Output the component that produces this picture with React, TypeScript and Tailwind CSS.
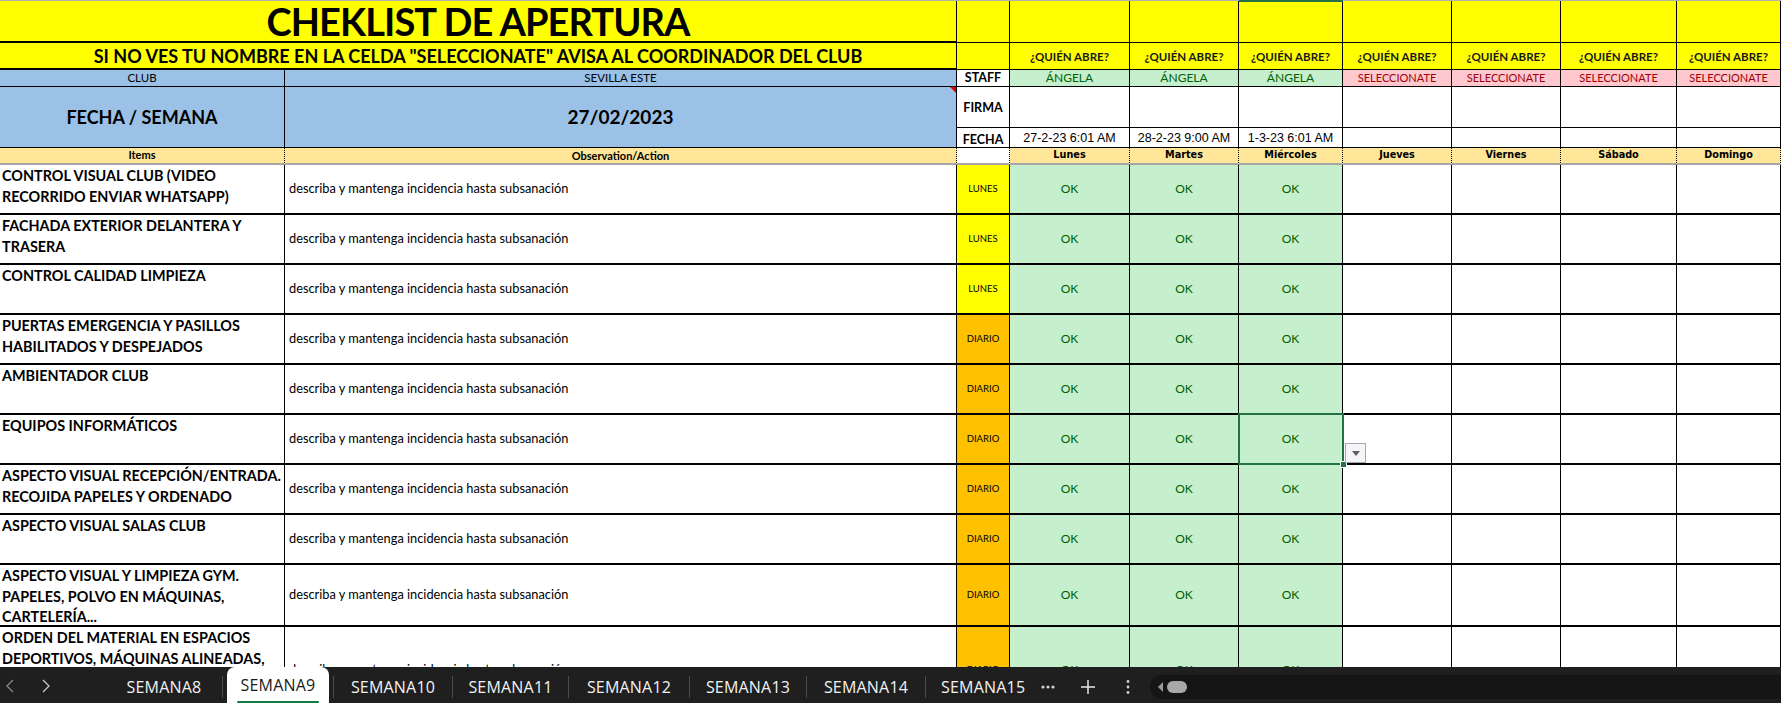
import React from "react";

const Y = "bg-[#ffff00]";
const BLUE = "bg-[#9bc2e6]";
const TAN = "bg-[#ffe699]";
const GREEN = "bg-[#c6efce]";
const PINK = "bg-[#ffc7ce]";
const ORANGE = "bg-[#ffc000]";
const LINES = "border-r border-b border-black box-border whitespace-nowrap";
const CELL = `${LINES} overflow-hidden`;
const CENTER = "flex items-center justify-center";

type Row = { t: string[]; f: "LUNES" | "DIARIO" };

const rows: Row[] = [
  { t: ["CONTROL VISUAL CLUB (VIDEO", "RECORRIDO ENVIAR WHATSAPP)"], f: "LUNES" },
  { t: ["FACHADA EXTERIOR DELANTERA Y", "TRASERA"], f: "LUNES" },
  { t: ["CONTROL CALIDAD LIMPIEZA"], f: "LUNES" },
  { t: ["PUERTAS EMERGENCIA Y PASILLOS", "HABILITADOS Y DESPEJADOS"], f: "DIARIO" },
  { t: ["AMBIENTADOR CLUB"], f: "DIARIO" },
  { t: ["EQUIPOS INFORMÁTICOS"], f: "DIARIO" },
  { t: ["ASPECTO VISUAL RECEPCIÓN/ENTRADA.", "RECOJIDA PAPELES Y ORDENADO"], f: "DIARIO" },
  { t: ["ASPECTO VISUAL SALAS CLUB"], f: "DIARIO" },
  { t: ["ASPECTO VISUAL Y LIMPIEZA GYM.", "PAPELES, POLVO EN MÁQUINAS,", "CARTELERÍA..."], f: "DIARIO" },
  { t: ["ORDEN DEL MATERIAL EN ESPACIOS", "DEPORTIVOS, MÁQUINAS ALINEADAS,", "ETC."], f: "DIARIO" },
];

const days = ["Lunes", "Martes", "Miércoles", "Jueves", "Viernes", "Sábado", "Domingo"];

function Tab({ label, w, active }: { label: string; w: string; active?: boolean }) {
  if (active) {
    return (
      <div className={`${w} h-full bg-white rounded-t-[8px] flex flex-col items-center pt-[8px] text-[#1a1a1a]`}>
        <span className="leading-[20px]">{label}</span>
        <span className="mt-[6px] h-[3px] w-[82px] bg-[#107c41] rounded-full" />
      </div>
    );
  }
  return (
    <div className={`${w} h-full flex items-center justify-center pt-[3px]`}>
      <span>{label}</span>
    </div>
  );
}

function Sep() {
  return <div className="w-px h-[22px] bg-[#4a4a4a] self-center mt-[3px]" />;
}

export default function App() {
  return (
    <div className="w-[1781px] h-[703px] overflow-hidden flex flex-col bg-white font-['Lato',sans-serif] text-black">
      <div className="relative h-[667px] overflow-hidden">
        <div className="grid grid-cols-[285px_672px_53px_120px_109px_104px_109px_109px_116px_104px] grid-rows-[43px_27px_17px_41px_20px_17px_repeat(8,50px)_62px_88px]">
          {/* Row 1 */}
          <div className={`col-span-2 ${Y} ${LINES} border-b-2 ${CENTER} font-bold text-[38px] leading-[40px] tracking-[-0.9px]`}>
            CHEKLIST DE APERTURA
          </div>
          {Array.from({ length: 8 }).map((_, i) => (
            <div key={"t" + i} className={`${Y} ${CELL}`} />
          ))}

          {/* Row 2 */}
          <div className={`col-span-2 ${Y} ${CELL} border-b-2 ${CENTER} font-bold text-[18px] leading-[22px]`}>
            SI NO VES TU NOMBRE EN LA CELDA "SELECCIONATE" AVISA AL COORDINADOR DEL CLUB
          </div>
          <div className={`${Y} ${CELL}`} />
          {Array.from({ length: 7 }).map((_, i) => (
            <div key={"q" + i} className={`${Y} ${CELL} ${CENTER} font-bold text-[11.5px] text-[#1a1a1a] pt-[1px]`}>
              ¿QUIÉN ABRE?
            </div>
          ))}

          {/* Row 3 */}
          <div className={`${BLUE} ${CELL} ${CENTER} text-[11.5px] leading-[14px]`}>CLUB</div>
          <div className={`${BLUE} ${CELL} ${CENTER} text-[11.5px] leading-[14px]`}>SEVILLA ESTE</div>
          <div className={`${CELL} ${CENTER} font-bold text-[12.5px]`}>STAFF</div>
          {Array.from({ length: 3 }).map((_, i) => (
            <div key={"a" + i} className={`${GREEN} ${CELL} ${CENTER} text-[12px] text-[#006100]`}>
              ÁNGELA
            </div>
          ))}
          {Array.from({ length: 4 }).map((_, i) => (
            <div key={"s" + i} className={`${PINK} ${CELL} ${CENTER} text-[11px] text-[#9c0006]`}>
              SELECCIONATE
            </div>
          ))}

          {/* Rows 4-5 */}
          <div className={`row-span-2 ${BLUE} ${CELL} ${CENTER} font-bold text-[18px]`}>FECHA / SEMANA</div>
          <div className={`relative row-span-2 ${BLUE} ${CELL} ${CENTER} font-bold text-[19px]`}>
            27/02/2023
            <span className="absolute top-0 right-0 w-0 h-0 border-l-[6px] border-l-transparent border-t-[6px] border-t-[#e00000]" />
          </div>
          <div className={`${CELL} ${CENTER} font-bold text-[12.5px] pt-[3px]`}>FIRMA</div>
          {Array.from({ length: 7 }).map((_, i) => (
            <div key={"fi" + i} className={CELL} />
          ))}
          <div className={`${CELL} ${CENTER} font-bold text-[12.5px] pt-[5px]`}>FECHA</div>
          {["27-2-23 6:01 AM", "28-2-23 9:00 AM", "1-3-23 6:01 AM"].map((d) => (
            <div key={d} className={`${CELL} ${CENTER} font-['Liberation_Sans',sans-serif] text-[12.5px] pt-[2px]`}>
              {d}
            </div>
          ))}
          {Array.from({ length: 4 }).map((_, i) => (
            <div key={"fe" + i} className={CELL} />
          ))}

          {/* Header row */}
          <div className={`${TAN} ${CELL} border-b-2 border-b-[#a6a6a6] [border-right-style:dotted] ${CENTER} font-bold text-[11px]`}>
            Items
          </div>
          <div className={`${TAN} ${CELL} border-b-2 border-b-[#a6a6a6] [border-right-style:dotted] ${CENTER} font-bold text-[11px] pt-[2px]`}>
            Observation/Action
          </div>
          <div className={`bg-white ${CELL} border-b-2 border-b-[#a6a6a6] [border-right-style:dotted]`} />
          {days.map((d) => (
            <div
              key={d}
              className={`${TAN} ${CELL} border-b-2 border-b-[#a6a6a6] [border-right-style:dotted] ${CENTER} font-['DejaVu_Sans',sans-serif] font-bold text-[9.7px]`}
            >
              {d}
            </div>
          ))}

          {/* Data rows */}
          {rows.map((r, ri) => (
            <React.Fragment key={ri}>
              <div className={`${CELL} border-b-2 pl-[2px] pt-[1px] font-bold text-[14.4px] leading-[20.5px]`}>
                {r.t.map((l) => (
                  <div key={l}>{l}</div>
                ))}
              </div>
              <div className={`${CELL} border-b-2 flex items-center pl-[4px] text-[12.8px]`}>
                describa y mantenga incidencia hasta subsanación
              </div>
              <div className={`${r.f === "LUNES" ? Y : ORANGE} ${CELL} border-b-2 ${CENTER} text-[9.5px]`}>{r.f}</div>
              {Array.from({ length: 3 }).map((_, i) => (
                <div key={"ok" + i} className={`${GREEN} ${CELL} border-b-2 ${CENTER} text-[12px] text-[#006100]`}>
                  OK
                </div>
              ))}
              {Array.from({ length: 4 }).map((_, i) => (
                <div key={"e" + i} className={`${CELL} border-b-2`} />
              ))}
            </React.Fragment>
          ))}
        </div>

        {/* overlays */}
        <div className="absolute left-0 top-0 w-full h-px bg-[#b0b0b0]" />
        <div className="absolute left-[1239px] top-0 w-[104px] h-[2px] bg-[#217346]" />
        <div className="absolute left-[1238px] top-[413px] w-[106px] h-[52px] border-2 border-[#217346]" />
        <div className="absolute left-[1340px] top-[461px] w-[7px] h-[7px] bg-[#217346] border border-white" />
        <div className="absolute left-[1345px] top-[443px] w-[21px] h-[20px] bg-[#f4f5f8] border border-[#a8a8a8] flex items-center justify-center">
          <span className="w-0 h-0 border-l-[4px] border-r-[4px] border-t-[5px] border-l-transparent border-r-transparent border-t-[#606060]" />
        </div>
      </div>

      {/* Tab bar */}
      <div className="h-[36px] bg-[#1f1f1f] flex items-stretch text-[#f2f2f2] font-['Open_Sans',sans-serif] text-[16px] tracking-[0.2px]">
        <div className="w-[106px] flex items-center pt-[2px]">
          <svg width="12" height="16" viewBox="0 0 12 16" className="ml-[4px]">
            <path d="M9 2 L3 8 L9 14" fill="none" stroke="#8a8a8a" strokeWidth="1.3" />
          </svg>
          <svg width="12" height="16" viewBox="0 0 12 16" className="ml-[24px]">
            <path d="M3 2 L9 8 L3 14" fill="none" stroke="#c8c8c8" strokeWidth="1.3" />
          </svg>
        </div>
        <Tab label="SEMANA8" w="w-[116px]" />
        <Sep />
        <div className="w-[4px]" />
        <Tab label="SEMANA9" w="w-[102px]" active />
        <div className="w-[4px]" />
        <Sep />
        <Tab label="SEMANA10" w="w-[118px]" />
        <Sep />
        <Tab label="SEMANA11" w="w-[115px]" />
        <Sep />
        <Tab label="SEMANA12" w="w-[120px]" />
        <Sep />
        <Tab label="SEMANA13" w="w-[116px]" />
        <Sep />
        <Tab label="SEMANA14" w="w-[118px]" />
        <Sep />
        <div className="w-[110px] h-full flex items-center pl-[15px] pt-[3px]">SEMANA15</div>
        <div className="w-[24px] flex items-center justify-center pt-[3px]">
          <svg width="14" height="4" viewBox="0 0 14 4">
            <circle cx="2" cy="2" r="1.6" fill="#d0d0d0" />
            <circle cx="7" cy="2" r="1.6" fill="#d0d0d0" />
            <circle cx="12" cy="2" r="1.6" fill="#d0d0d0" />
          </svg>
        </div>
        <div className="w-[16px]" />
        <div className="w-[24px] flex items-center justify-center pt-[3px]">
          <svg width="16" height="16" viewBox="0 0 16 16">
            <path d="M8 1 V15 M1 8 H15" stroke="#e6e6e6" strokeWidth="1.5" />
          </svg>
        </div>
        <div className="w-[16px]" />
        <div className="w-[24px] flex items-center justify-center pt-[3px]">
          <svg width="4" height="16" viewBox="0 0 4 16">
            <circle cx="2" cy="2.5" r="1.4" fill="#d0d0d0" />
            <circle cx="2" cy="8" r="1.4" fill="#d0d0d0" />
            <circle cx="2" cy="13.5" r="1.4" fill="#d0d0d0" />
          </svg>
        </div>
        <div className="flex-1 flex items-center pl-[10px] pt-[3px]">
          <div className="h-[24px] flex-1 rounded-l-full bg-[#151515] flex items-center pl-[8px]">
            <span className="w-0 h-0 border-t-[5px] border-b-[5px] border-r-[5px] border-t-transparent border-b-transparent border-r-[#9a9a9a]" />
            <span className="ml-[4px] w-[20px] h-[12px] rounded-full bg-[#a8a8a8]" />
          </div>
        </div>
      </div>
    </div>
  );
}
